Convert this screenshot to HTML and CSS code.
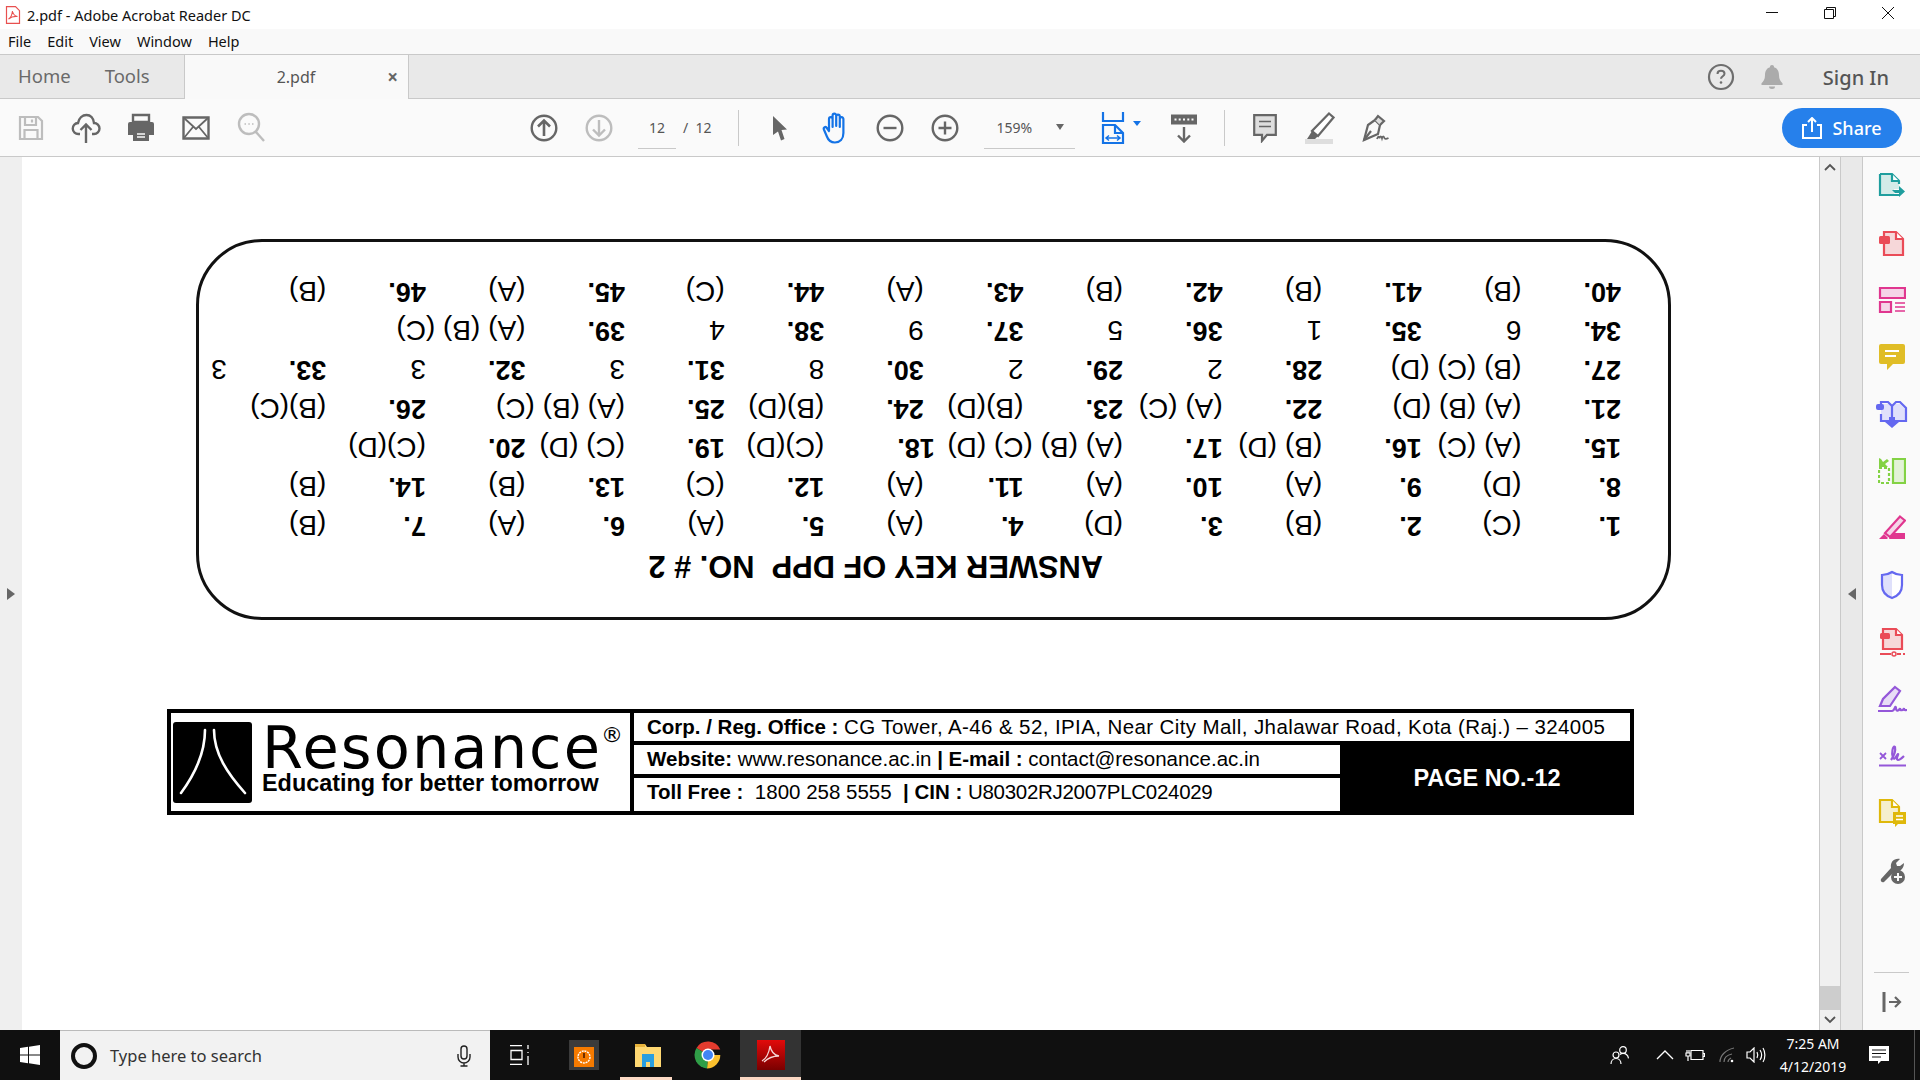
FILE: index.html
```html
<!DOCTYPE html>
<html lang="en">
<head>
<meta charset="utf-8">
<title>2.pdf - Adobe Acrobat Reader DC</title>
<link rel="stylesheet" href="styles.css">
</head>
<body>
<header class="titlebar">
  <svg class="title-icon" width="16" height="18" viewBox="0 0 16 18"><path d="M1.5.7h9l4 4v12.6h-13z" fill="#fff" stroke="#e8504f" stroke-width="1.2"/><path d="M3.500 13c2-1 3.500-4 4-8 .5 3 2 5 5 5.500-3-.3-6.500.5-9 2.500z" fill="none" stroke="#e8504f" stroke-width="1.100"/></svg>
  <span class="title-text">2.pdf - Adobe Acrobat Reader DC</span>
  <div class="win-controls">
    <svg width="12" height="12" viewBox="0 0 12 12"><path d="M0 5.500h12" stroke="#111" stroke-width="1"/></svg>
    <svg width="12" height="12" viewBox="0 0 12 12"><path d="M.5 2.500h9v9h-9zM2.500 2.500v-2h9v9h-2" fill="none" stroke="#111" stroke-width="1"/></svg>
    <svg width="12" height="12" viewBox="0 0 12 12"><path d="M0 0l12 12M12 0L0 12" stroke="#111" stroke-width="1"/></svg>
  </div>
</header>
<nav class="menubar"><span>File</span><span>Edit</span><span>View</span><span>Window</span><span>Help</span></nav>
<div class="tabbar">
  <span class="tab-link home">Home</span>
  <span class="tab-link tools">Tools</span>
  <div class="doc-tab"><span class="doc-name">2.pdf</span><span class="doc-close">×</span></div>
  <div class="tab-right">
    <svg width="28" height="28" viewBox="0 0 28 28"><circle cx="14" cy="14" r="12" fill="none" stroke="#6e6e6e" stroke-width="2.200"/><path d="M10.500 11c0-2 1.500-3.200 3.500-3.200s3.500 1.200 3.500 3c0 2.500-3.500 2.500-3.500 5" fill="none" stroke="#6e6e6e" stroke-width="2"/><circle cx="14" cy="19.500" r="1.300" fill="#6e6e6e"/></svg>
    <svg class="bell" width="24" height="28" viewBox="0 0 24 28"><path d="M12 2a2 2 0 0 1 2 2.300c3.500 1 5 4 5 8 0 4 1.500 6 3.500 8v1.700h-21v-1.700c2-2 3.500-4 3.500-8 0-4 1.500-7 5-8A2 2 0 0 1 12 2z" fill="#ababab"/><path d="M9 23.500h6a3 2.500 0 0 1-6 0z" fill="#ababab"/></svg>
    <span class="signin">Sign In</span>
  </div>
</div>
<div class="toolbar">
  <span class="slot first">
    <svg width="28" height="28" viewBox="0 0 28 28" fill="none" stroke="#bdbdbd" stroke-width="2.200"><path d="M3 3h18l4 4v18H3z"/><path d="M8 3v8h11V3M15 5.500v3M7.500 25v-9h13v9"/></svg>
  </span>
  <span class="slot">
    <svg width="30" height="32" viewBox="0 0 30 32" fill="none" stroke="#666" stroke-width="2.400"><path d="M9 22H7.500a5.500 5.500 0 0 1-.5-11C8 6 11.500 3 15.500 3c4 0 7 3 7.500 8a5.500 5.500 0 0 1 0 11h-2"/><path d="M15 31V13M9.500 18l5.500-5.500 5.500 5.500"/></svg>
  </span>
  <span class="slot">
    <svg width="28" height="30" viewBox="0 0 28 30"><path d="M6 2h16v7H6z" fill="none" stroke="#666" stroke-width="2.400"/><path d="M3 9h22a2 2 0 0 1 2 2v11h-5v-5H6v5H1V11a2 2 0 0 1 2-2z" fill="#666"/><path d="M6 17h16v11H6z" fill="#666"/><path d="M10 21h8M10 24h8" stroke="#fafafa" stroke-width="1.500"/></svg>
  </span>
  <span class="slot">
    <svg width="28" height="26" viewBox="0 0 28 26" fill="none" stroke="#666" stroke-width="2.400"><path d="M1.500 2.500h25v21h-25z"/><path d="M1.500 2.500L14 14 26.500 2.500M1.500 23.500l9.500-11.500M26.500 23.500L17 12" stroke-width="1.800"/></svg>
  </span>
  <span class="slot">
    <svg width="28" height="34" viewBox="0 0 28 34" fill="none" stroke="#bdbdbd" stroke-width="2.400"><circle cx="12" cy="13" r="10"/><path d="M19 21l8 9"/><path d="M7.500 13h1.500M11.300 13h1.500M15 13h1.500" stroke-width="1.600"/></svg>
  </span>

  <span class="slot nav-start">
    <svg width="28" height="28" viewBox="0 0 28 28" fill="none" stroke="#666" stroke-width="2.400"><circle cx="14" cy="14" r="12.300"/><path d="M14 22V7M8 12.500L14 6.500l6 6" stroke-width="2.600"/></svg>
  </span>
  <span class="slot">
    <svg width="28" height="28" viewBox="0 0 28 28" fill="none" stroke="#bdbdbd" stroke-width="2.400"><circle cx="14" cy="14" r="12.300"/><path d="M14 6v15M8 15.500l6 6 6-6"/></svg>
  </span>
  <span class="field page-field">12</span>
  <span class="page-total">/ &nbsp;12</span>
  <span class="tb-sep sep-one"></span>
  <span class="slot cursor-slot">
    <svg width="20" height="26" viewBox="0 0 20 26"><path d="M3 1l14 13.500-5.500.5 3 9-3.500 1.500-3-9L3 20z" fill="#666"/></svg>
  </span>
  <span class="slot">
    <svg width="28" height="32" viewBox="0 0 28 32" fill="none" stroke="#1473e6" stroke-width="2.200" stroke-linecap="round" stroke-linejoin="round"><path d="M8 19V7a1.800 1.800 0 0 1 3.600 0v8M11.600 14V3.500a1.800 1.800 0 0 1 3.600 0V14M15.200 14V4.500a1.800 1.800 0 0 1 3.600 0V15M18.800 15V7a1.800 1.800 0 0 1 3.600 0v14c0 6-3.500 9.500-8.500 9.500-4 0-6.500-2-8-6l-3-7c-.8-2 1.800-3.500 3-1.500L8 19"/></svg>
  </span>
  <span class="slot">
    <svg width="28" height="28" viewBox="0 0 28 28" fill="none" stroke="#666" stroke-width="2.400"><circle cx="14" cy="14" r="12.300"/><path d="M7.500 14h13"/></svg>
  </span>
  <span class="slot">
    <svg width="28" height="28" viewBox="0 0 28 28" fill="none" stroke="#666" stroke-width="2.400"><circle cx="14" cy="14" r="12.300"/><path d="M7.500 14h13M14 7.500v13"/></svg>
  </span>
  <span class="field zoom-field"><span>159%</span><i class="caret"></i></span>
  <span class="fit-slot">
    <svg width="24" height="32" viewBox="0 0 24 32" fill="none" stroke="#1473e6" stroke-width="2.200"><path d="M2 0v9h20V0"/><path d="M2 31V13h12l8 8v10z"/><path d="M14 13v8h8"/><path d="M5 26h14M8 23.500L5 26l3 2.500M16 23.500l3 2.500-3 2.500" stroke-width="1.500"/></svg>
  </span>
  <span class="fit-caret"></span>
  <span class="read-slot">
    <svg width="28" height="30" viewBox="0 0 28 30" fill="none" stroke="#666"><path d="M1 1.500h26v10H1z" fill="#666" stroke="none"/><path d="M4.500 6.500h2M8.700 6.500h2M13 6.500h2M17.300 6.500h2M21.500 6.500h2" stroke="#fafafa" stroke-width="2.200"/><path d="M14 14v14M8 22.500l6 6 6-6" stroke-width="2.400"/></svg>
  </span>
  <span class="tb-sep sep-two"></span>
  <span class="slot comment-slot">
    <svg width="26" height="30" viewBox="0 0 26 30"><path d="M2.200 2.200h21.600v19.600H15l-5 6v-6H2.200z" fill="#dedede" stroke="#666" stroke-width="2.200"/><path d="M7 8.500h12M7 13.500h12" stroke="#666" stroke-width="1.600"/></svg>
  </span>
  <span class="slot">
    <svg width="30" height="32" viewBox="0 0 30 32"><path d="M0 27h28v5H0z" fill="#dedede"/><path d="M24 1.500l4.500 4L13 24l-6-5z" fill="#fff" stroke="#666" stroke-width="2.200"/><path d="M4 24l3-5 6 5-3 3H2z" fill="#666"/></svg>
  </span>
  <span class="slot">
    <svg width="30" height="30" viewBox="0 0 30 30" fill="none" stroke="#666" stroke-width="2.200"><path d="M15 7l5 5-2 9-14 6 4-15z" fill="#fafafa"/><path d="M15 7l3-4 6 5-4 4" fill="#dedede"/><path d="M4 27l7-9"/><path d="M17 26c1-3 2-3 2.500-.8.700-2.500 1.800-2.500 2.500 0 .7-2.500 1.800-2.500 2.500 0 .8 1 2 .8 4-.2" stroke-width="1.800"/></svg>
  </span>
  <span class="share">
    <svg width="20" height="22" viewBox="0 0 20 22" fill="none" stroke="#fff" stroke-width="2"><path d="M5 8H1v13h18V8h-4"/><path d="M10 15V2M6 5l4-4 4 4"/></svg>
    <span>Share</span>
  </span>
</div>

<main class="workspace">
  <aside class="left-strip"><i class="arrow-right"></i></aside>
  <section class="doc">
    <div class="answers">
      <div class="answers-title">ANSWER KEY OF DPP&nbsp;&nbsp;NO. # 2</div>
      <div class="row"><b>1.</b><span>(C)</span><b>2.</b><span>(B)</span><b>3.</b><span>(D)</span><b>4.</b><span>(A)</span><b>5.</b><span>(A)</span><b>6.</b><span>(A)</span><b>7.</b><span>(B)</span></div>
      <div class="row"><b>8.</b><span>(D)</span><b>9.</b><span>(A)</span><b>10.</b><span>(A)</span><b>11.</b><span>(A)</span><b>12.</b><span>(C)</span><b>13.</b><span>(B)</span><b>14.</b><span>(B)</span></div>
      <div class="row"><b>15.</b><span>(A) (C)</span><b>16.</b><span>(B) (D)</span><b>17.</b><span class="wide">(A) (B) (C) (D)</span><b class="nudge">18.</b><span>(C)(D)</span><b>19.</b><span>(C) (D)</span><b>20.</b><span>(C)(D)</span></div>
      <div class="row"><b>21.</b><span class="wide">(A) (B) (D)</span><b>22.</b><span>(A) (C)</span><b>23.</b><span>(B)(D)</span><b>24.</b><span>(B)(D)</span><b>25.</b><span class="wide">(A) (B) (C)</span><b>26.</b><span>(B)(C)</span></div>
      <div class="row"><b>27.</b><span class="wide">(B) (C) (D)</span><b>28.</b><span>2</span><b>29.</b><span>2</span><b>30.</b><span>8</span><b>31.</b><span>3</span><b>32.</b><span>3</span><b>33.</b><span>3</span></div>
      <div class="row"><b>34.</b><span>6</span><b>35.</b><span>1</span><b>36.</b><span>5</span><b>37.</b><span>9</span><b>38.</b><span>4</span><b>39.</b><span>(A) (B) (C)</span></div>
      <div class="row"><b>40.</b><span>(B)</span><b>41.</b><span>(B)</span><b>42.</b><span>(B)</span><b>43.</b><span>(A)</span><b>44.</b><span>(C)</span><b>45.</b><span>(A)</span><b>46.</b><span>(B)</span></div>
    </div>

    <div class="letterhead">
      <div class="brand">
        <svg class="brand-mark" width="79" height="81" viewBox="0 0 79 81"><rect width="79" height="81" rx="3" fill="#000"/><path d="M32 8C32 32 22 52 8 71" fill="none" stroke="#fff" stroke-width="2.600" stroke-linecap="round"/><path d="M41 8C41 32 55 52 72 71" fill="none" stroke="#fff" stroke-width="2.600" stroke-linecap="round"/></svg>
        <div class="brand-text">
          <div class="brand-name">Resonance<sup>®</sup></div>
          <div class="brand-tag">Educating for better tomorrow</div>
        </div>
      </div>
      <div class="info">
        <div class="info-line full"><b>Corp. / Reg. Office :</b> <span class="spaced">CG Tower, A-46 &amp; 52, IPIA, Near City Mall, Jhalawar Road, Kota (Raj.) – 324005</span></div>
        <div class="info-line"><b>Website:</b> www.resonance.ac.in <b>| E-mail :</b> contact@resonance.ac.in</div>
        <div class="page-no">PAGE NO.-12</div>
        <div class="info-line"><b>Toll Free :</b>&nbsp; 1800 258 5555 &nbsp;<b>| CIN :</b> <span class="tight">U80302RJ2007PLC024029</span></div>
      </div>
    </div>
  </section>
  <div class="scrollbar">
    <svg width="12" height="8" viewBox="0 0 12 8"><path d="M1 7l5-5 5 5" fill="none" stroke="#555" stroke-width="1.800"/></svg>
    <div class="thumb"></div>
    <svg width="12" height="8" viewBox="0 0 12 8"><path d="M1 1l5 5 5-5" fill="none" stroke="#555" stroke-width="1.800"/></svg>
  </div>
  <div class="pane-handle"><i class="arrow-left"></i></div>
  <aside class="tools-pane">
    <span class="tool"><svg width="28" height="28" viewBox="0 0 28 28"><path d="M2 2h12l7 7v8h-5v6H2z" fill="#d3ebe8"/><path d="M2 2h12l7 7v3M21 23H2V2" fill="none" stroke="#1f9e9e" stroke-width="2.200"/><path d="M14 2v7h7" fill="#fff" stroke="#1f9e9e" stroke-width="2.200"/><path d="M14 18h7v-4l6 5.500-6 5.500v-4h-4z" fill="#1f9e9e"/></svg></span>
    <span class="tool"><svg width="28" height="28" viewBox="0 0 28 28"><path d="M6 3h12l7 7v16H6z" fill="#f6d7d9" stroke="#ea4b57" stroke-width="2.200"/><path d="M18 3v7h7" fill="#fff" stroke="#ea4b57" stroke-width="2.200"/><rect x="1" y="7" width="11" height="8" rx="1.500" fill="#ea4b57"/></svg></span>
    <span class="tool"><svg width="28" height="28" viewBox="0 0 28 28"><path d="M2 2h25v10H2z" fill="#f5d4e8" stroke="#e0368f" stroke-width="2.200"/><path d="M2 16h11v10H2z" fill="#f5d4e8" stroke="#e0368f" stroke-width="2.200"/><path d="M17 17h10M17 21h10M17 25h10" stroke="#e0368f" stroke-width="1.500"/></svg></span>
    <span class="tool"><svg width="26" height="28" viewBox="0 0 26 28"><path d="M2 1h22a2 2 0 0 1 2 2v16a2 2 0 0 1-2 2H14l-6 6v-6H2a2 2 0 0 1-2-2V3a2 2 0 0 1 2-2z" fill="#e0bd26"/><path d="M6 8h14M6 13h11" stroke="#fff" stroke-width="2"/></svg></span>
    <span class="tool"><svg width="32" height="30" viewBox="0 0 32 30"><path d="M5 5h8l3 3v14H5zM17 5h7l6 6v11H17z" fill="#e0e0fb"/><path d="M5 6V3h7l4 4v15H5v-7M16 7l4-4h4l6 6v13H18" fill="none" stroke="#6468f0" stroke-width="2.200"/><rect x="0" y="5" width="8" height="6" rx="2" fill="#6468f0"/><path d="M13 18h6v5h4l-7 6-7-6h4z" fill="#6468f0"/></svg></span>
    <span class="tool"><svg width="28" height="28" viewBox="0 0 28 28"><path d="M15 2h12v24H15z" fill="#e3f2d7" stroke="#83d244" stroke-width="2.200"/><path d="M1 11h10v15H1z" fill="none" stroke="#83d244" stroke-width="2.200" stroke-dasharray="3 2"/><path d="M1 1v9h9l-3-3 4-3-2-2-4 3-2-3z" fill="#83d244"/></svg></span>
    <span class="tool"><svg width="28" height="26" viewBox="0 0 28 26"><path d="M11 24h16v-6H14z" fill="#e0368f"/><path d="M22 1.500l5 4L12 22l-5-4z" fill="#f5d4e8" stroke="#e0368f" stroke-width="2.200"/><path d="M1 24l5-5 4 4-1 1z" fill="#e0368f"/></svg></span>
    <span class="tool"><svg width="24" height="30" viewBox="0 0 24 30"><path d="M12 28c-6-2-10-6-10-13V5c4 0 7-1 10-3 3 2 6 3 10 3v10c0 7-4 11-10 13z" fill="#fff" stroke="none"/><path d="M12 2c-3 2-6 3-10 3v10c0 7 4 11 10 13z" fill="#dfe0fb"/><path d="M12 28c-6-2-10-6-10-13V5c4 0 7-1 10-3 3 2 6 3 10 3v10c0 7-4 11-10 13z" fill="none" stroke="#6468f0" stroke-width="2.200"/></svg></span>
    <span class="tool"><svg width="26" height="30" viewBox="0 0 26 30"><path d="M4 2h13l6 6v14H4z" fill="#f6d7d9" stroke="#ea4b57" stroke-width="2.200"/><path d="M17 2v6h6" fill="#fff" stroke="#ea4b57" stroke-width="2.200"/><rect x="1" y="6" width="10" height="6" rx="1.500" fill="#ea4b57"/><path d="M1 27h11M18 27h4M24 27h2" stroke="#ea4b57" stroke-width="2"/><circle cx="15" cy="27" r="2" fill="none" stroke="#ea4b57" stroke-width="1.500"/></svg></span>
    <span class="tool"><svg width="30" height="28" viewBox="0 0 30 28" fill="none" stroke="#9457d9" stroke-width="2.200"><path d="M18 2l5 4-10 15H3l3-7z" fill="#e8dcf6"/><path d="M1 26h14c3 0 3-7 4-3 0 4 3 3 4 0 0 3 3 3 4 0 0 3 1 2 3 2"/></svg></span>
    <span class="tool"><svg width="28" height="24" viewBox="0 0 28 24" fill="none" stroke="#9457d9"><path d="M1 21.500h27" stroke-width="2"/><path d="M2 9l6 6M8 9l-6 6" stroke-width="1.800"/><path d="M13 16c3-4 5-8 4-13-2-2-4 6-2 11 2 2 3-2 5-4 1 0-3 5 0 6 2 0 4-2 6-4" stroke-width="2.200"/></svg></span>
    <span class="tool"><svg width="28" height="30" viewBox="0 0 28 30"><path d="M2 2h12l7 7v15H2z" fill="#f5efcd" stroke="#dfb80a" stroke-width="2.200"/><path d="M14 2v7h7" fill="#fff" stroke="#dfb80a" stroke-width="2.200"/><path d="M15 14h13v12h-8l-3 3v-3h-2z" fill="#dfb80a"/><path d="M18 18h7M18 21.500h7" stroke="#fff" stroke-width="1.500"/></svg></span>
    <span class="tool"><svg width="28" height="28" viewBox="0 0 28 28"><path d="M3 23L13 12c-1-6 3-10 9-9l-4 4 1 3 3 0 4-3c0 6-5 10-10 9L6 26c-2 1-4-1-3-3z" fill="#666"/><circle cx="20" cy="21" r="7" fill="#666"/><path d="M16 21h8M20 17v8" stroke="#fafafa" stroke-width="2"/></svg></span>
    <div class="pane-foot">
      <svg width="20" height="20" viewBox="0 0 20 20" fill="none" stroke="#666" stroke-width="2.200"><path d="M2 0v20" stroke-width="3"/><path d="M7 10h11M13 5l5 5-5 5"/></svg>
    </div>
  </aside>
</main>

<footer class="taskbar">
  <span class="start"><svg width="20" height="20" viewBox="0 0 20 20" fill="#fff"><path d="M0 3l8-1.200V9.500H0zM9 1.700L20 0v9.500H9zM0 10.500h8v7.700L0 17zM9 10.500h11V20L9 18.300z"/></svg></span>
  <div class="search">
    <i class="cortana"></i>
    <span class="search-text">Type here to search</span>
    <svg class="mic" width="14" height="22" viewBox="0 0 14 22" fill="none" stroke="#222" stroke-width="1.400"><rect x="4" y="1" width="6" height="13" rx="3"/><path d="M1 9v3a6 6 0 0 0 12 0V9M7 18v3M3.500 21h7"/></svg>
  </div>
  <span class="task-view"><svg width="20" height="20" viewBox="0 0 20 20" fill="none" stroke="#fff" stroke-width="1.300"><path d="M0 .7h12M1 5.500h11v9H1zM0 19.300h12M18 0v4M18 7v1M18 11v9"/></svg></span>
  <span class="app app-timer"><svg width="30" height="30" viewBox="0 0 30 30"><rect width="30" height="30" fill="#3b3b3b"/><rect x="5" y="7" width="20" height="20" fill="#f57a00"/><circle cx="15" cy="17" r="6" fill="none" stroke="#fff" stroke-width="1.400" stroke-dasharray="2 .8"/><path d="M15 13v5" stroke="#4a1c00" stroke-width="1.600"/></svg></span>
  <span class="app app-folder"><svg width="28" height="26" viewBox="0 0 28 26"><path d="M1 2h10l2 3h14v20H1z" fill="#ffd872"/><path d="M1 2h10v3H1z" fill="#e8b33c"/><path d="M8 12h12v13h-4v-5h-4v5H8z" fill="#2a9ee0"/></svg></span>
  <span class="app"><svg width="28" height="28" viewBox="0 0 28 28"><path d="M14 14L2.500 7A13.500 13.500 0 0 1 26.300 8.500H14z" fill="#e33b2e"/><path d="M14 14h12.300A13.500 13.500 0 0 1 13 27.500z" fill="#fbc02d"/><path d="M14 14L13 27.500A13.500 13.500 0 0 1 2.500 7z" fill="#2f9e47"/><circle cx="14" cy="14" r="6.500" fill="#fff"/><circle cx="14" cy="14" r="5" fill="#4285f4"/></svg></span>
  <span class="app active"><svg width="28" height="30" viewBox="0 0 28 30"><defs><linearGradient id="acro" x1="0" y1="0" x2="0" y2="1"><stop offset="0" stop-color="#e20a0a"/><stop offset="1" stop-color="#7a0000"/></linearGradient></defs><rect width="28" height="30" fill="url(#acro)"/><path d="M5 21c5-3 7-8 8-15 1 5 3 9 9 10-6 0-11 2-15 6" fill="none" stroke="#f6d6d6" stroke-width="1.300"/></svg></span>
  <div class="tray">
    <svg class="tray-people" width="20" height="20" viewBox="0 0 20 20" fill="none" stroke="#fff" stroke-width="1.200"><circle cx="13" cy="5" r="3.300"/><circle cx="6" cy="10" r="3"/><path d="M1 19c0-3 2-5.500 5-5.500s5 2.500 5 5.500M10 9.500c1-1 2-1.200 3-1.200 3 0 5 2 5.500 5"/></svg>
    <svg class="tray-chev" width="18" height="10" viewBox="0 0 18 10" fill="none" stroke="#fff" stroke-width="1.300"><path d="M1 9l8-8 8 8"/></svg>
    <svg class="tray-batt" width="20" height="14" viewBox="0 0 20 14" fill="none" stroke="#fff" stroke-width="1.200"><path d="M6 2.500h12v9H6z"/><path d="M18 5.500h1.500v3H18"/><path d="M1 5h4v3H1zM2 2v3M4 2v3M3 8v5"/></svg>
    <svg class="tray-wifi" width="18" height="16" viewBox="0 0 18 16" fill="none" stroke="#777" stroke-width="1.200"><path d="M1 15C1 9 6 3 15 1M5 15c0-4 3-7 8-8" /><path d="M9 15c0-2 1-3 3-4"/><circle cx="13" cy="14" r="1.300" fill="#fff" stroke="none"/></svg>
    <svg class="tray-vol" width="20" height="16" viewBox="0 0 20 16" fill="none" stroke="#fff" stroke-width="1.200"><path d="M1 5h3l4-4v14l-4-4H1z"/><path d="M11 5c1 2 1 4 0 6M14 3c2 3 2 7 0 10M17 1c2.500 4 2.500 10 0 14"/></svg>
    <div class="clock"><span>7:25 AM</span><span>4/12/2019</span></div>
    <svg class="tray-note" width="20" height="18" viewBox="0 0 20 18"><path d="M0 0h20v15H12l-3 3v-3H0z" fill="#fff"/><path d="M3 4h14M3 7.500h14M3 11h9" stroke="#111" stroke-width="1.200"/></svg>
    <i class="tray-edge"></i>
  </div>
</footer>
</body>
</html>
```

FILE: styles.css
```css
* { box-sizing: border-box; }
html, body { margin: 0; height: 100%; }
body {
  display: flex;
  flex-direction: column;
  height: 1080px;
  width: 1920px;
  overflow: hidden;
  background: #fff;
  font-family: "Noto Sans", "Open Sans", sans-serif;
  color: #222;
}
svg { display: block; flex: none; }

.titlebar {
  height: 29px;
  flex: none;
  display: flex;
  align-items: center;
  padding-left: 5px;
  background: #fff;
  font-size: 14.500px;
  color: #111;
}
.title-text { margin-left: 6px; }
.win-controls { margin-left: auto; display: flex; gap: 46px; padding-right: 26px; margin-top: -3px; }

.menubar {
  height: 26px;
  flex: none;
  display: flex;
  align-items: center;
  gap: 16px;
  padding: 0 0 2px 8px;
  background: #f9f9f9;
  border-bottom: 1px solid #c9c9c9;
  font-size: 14.500px;
  color: #111;
}

.tabbar {
  height: 44px;
  flex: none;
  display: flex;
  align-items: center;
  background: #e9e9e9;
  border-bottom: 1px solid #c9c9c9;
  font-size: 18.500px;
  color: #6a6a6a;
}
.tab-link { margin-top: -2px; }
.home { margin-left: 18px; }
.tools { margin-left: 34px; }
.doc-tab {
  margin-left: 34px;
  width: 225px;
  height: 44px;
  display: flex;
  align-items: center;
  position: relative;
  background: #f9f9f9;
  border-left: 1px solid #c9c9c9;
  border-right: 1px solid #c9c9c9;
  font-size: 16px;
  color: #555;
}
.doc-name { margin-left: 92px; }
.doc-close { margin-left: 72px; font-size: 19px; font-weight: 700; color: #666; }
.tab-right { margin-left: auto; display: flex; align-items: center; padding-right: 31px; }
.bell { margin-left: 25px; }
.signin { margin-left: 39px; font-size: 20px; font-weight: 500; color: #555; margin-top: 1px; }

.toolbar {
  height: 58px;
  flex: none;
  display: flex;
  align-items: center;
  background: #fafafa;
  border-bottom: 1px solid #c9c9c9;
  padding-right: 18px;
}
.slot { width: 55px; display: flex; justify-content: center; align-items: center; flex: none; }
.first { margin-left: 3.500px; }
.nav-start { margin-left: 238px; }
.field {
  height: 36px;
  display: flex;
  align-items: center;
  justify-content: center;
  border-bottom: 1px solid #c9c9c9;
  font-size: 14px;
  color: #555;
  flex: none;
}
.page-field { width: 38px; margin-left: 11.500px; margin-top: 6px; padding-bottom: 6px; }
.page-total { width: 33px; margin-left: 7px; font-size: 14px; color: #555; flex: none; }
.tb-sep { width: 1px; height: 36px; background: #c9c9c9; flex: none; }
.sep-one { margin-left: 22px; }
.cursor-slot { margin-left: 13px; }
.zoom-field { width: 91px; margin-left: 11.500px; margin-top: 6px; padding-bottom: 6px; justify-content: flex-start; padding-left: 13px; }
.caret { border: 4.500px solid transparent; border-top: 6px solid #666; border-bottom: 0; margin-left: 24px; }
.fit-slot { width: 36px; margin-left: 20px; display: flex; justify-content: center; flex: none; }
.fit-caret { width: 0; border: 4px solid transparent; border-top: 5px solid #1473e6; border-bottom: 0; flex: none; margin-left: 2px; margin-top: -8px; }
.read-slot { width: 36px; margin-left: 25px; display: flex; justify-content: center; flex: none; }
.sep-two { margin-left: 22px; }
.comment-slot { margin-left: 12.500px; }
.share {
  margin-left: auto;
  width: 120px;
  height: 40px;
  flex: none;
  display: flex;
  align-items: center;
  justify-content: center;
  gap: 10px;
  border-radius: 20px;
  background: #2680eb;
  color: #fff;
  font-size: 18px;
  font-weight: 500;
}

.workspace { flex: 1; min-height: 0; display: flex; }
.left-strip { width: 22px; background: #efefef; flex: none; display: flex; align-items: center; justify-content: center; }
.arrow-right { border: 6px solid transparent; border-left: 8px solid #666; border-right: 0; }
.doc { flex: 1; min-width: 0; overflow: hidden; background: #fff; padding-top: 82px; font-family: "Liberation Sans", Arial, sans-serif; color: #000; }

.answers {
  width: 1475px;
  height: 381px;
  margin-left: 174px;
  padding: 29px 0 0 47px;
  border: 3px solid #111;
  border-radius: 66px;
  transform: rotate(180deg);
  font-size: 27px;
}
.answers-title { height: 43px; line-height: 43px; margin-left: 518px; font-size: 30.800px; font-weight: 700; white-space: nowrap; }
.row { display: grid; grid-template-columns: repeat(15, 99.600px); height: 39px; line-height: 39px; white-space: nowrap; }
.row b { font-weight: 700; }
.row span { font-size: 28px; }
.wide { grid-column: span 2; }
.nudge { transform: translateX(-11px); }

.letterhead {
  width: 1467px;
  height: 106px;
  margin: 89px 0 0 145px;
  display: grid;
  grid-template-columns: 459px 1fr;
  border: 4px solid #000;
  background: #000;
  gap: 4px;
}
.brand { background: #fff; display: flex; align-items: center; padding-left: 1px; }
.brand-mark { margin-left: 1px; }
.brand-text { margin: -4px 0 0 10px; width: 360px; }
.brand-name { font-family: "DejaVu Sans", sans-serif; font-size: 59px; line-height: 44px; letter-spacing: 2.100px; height: 45px; white-space: nowrap; }
.brand-name sup { font-size: 22px; line-height: 0; vertical-align: 26px; letter-spacing: 0; margin-left: -1px; }
.brand-tag { font-size: 23.400px; font-weight: 700; line-height: 24px; white-space: nowrap; }
.info { display: grid; grid-template-columns: 1fr 286px; grid-template-rows: 28px 29px 1fr; gap: 4px; font-size: 20.500px; }
.info-line { background: #fff; padding-left: 13px; line-height: 28px; white-space: pre; }
.spaced { letter-spacing: .4px; }
.tight { letter-spacing: -.3px; }
.full { grid-column: span 2; }
.page-no { grid-row: span 2; display: flex; align-items: center; justify-content: center; color: #fff; font-weight: 700; font-size: 23.500px; }

.scrollbar { width: 22px; flex: none; background: #f0f0f0; border-left: 1px solid #c9c9c9; border-right: 1px solid #c9c9c9; display: flex; flex-direction: column; align-items: center; padding: 6px 0 6px; }
.thumb { margin-top: auto; width: 20px; height: 24px; background: #cdcdcd; margin-bottom: 6px; }
.pane-handle { width: 22px; flex: none; background: #e9e9e9; border-right: 1px solid #c9c9c9; display: flex; align-items: center; justify-content: center; }
.arrow-left { border: 6px solid transparent; border-right: 8px solid #666; border-left: 0; }
.tools-pane { width: 57px; flex: none; background: #fafafa; display: flex; flex-direction: column; align-items: center; }
.tool { height: 57px; flex: none; display: flex; align-items: center; justify-content: center; width: 100%; }
.pane-foot { margin-top: auto; width: 35px; height: 58px; border-top: 1px solid #c9c9c9; display: flex; align-items: center; justify-content: center; }

.taskbar { height: 50px; flex: none; display: flex; align-items: center; background: #101010; color: #fff; }
.start { width: 60px; height: 50px; display: flex; align-items: center; justify-content: center; flex: none; }
.search { width: 430px; height: 50px; flex: none; display: flex; align-items: center; background: #f2f2f2; border-top: 1px solid #bbb; color: #333; font-size: 16.500px; }
.cortana { width: 26px; height: 26px; border: 4px solid #111; border-radius: 50%; margin-left: 11px; flex: none; }
.search-text { margin-left: 13px; }
.mic { margin-left: auto; margin-right: 19px; }
.task-view { width: 60px; margin-left: 0; display: flex; justify-content: center; flex: none; }
.app { width: 61px; height: 50px; display: flex; align-items: center; justify-content: center; flex: none; position: relative; }
.app-timer { width: 68px; }
.app-folder { width: 59px; }
.app-folder::after, .active::after { content: ""; position: absolute; left: 2px; right: 5px; bottom: 0; height: 3px; background: #fcd9c4; }
.active { background: #333; margin-left: 2px; }
.active::after { left: 0; right: 0; }
.tray { margin-left: auto; display: flex; align-items: center; height: 50px; }
.tray-chev { margin-left: 26px; }
.tray-batt { margin-left: 11px; }
.tray-wifi { margin-left: 14px; }
.tray-vol { margin-left: 9px; }
.clock { width: 90px; margin-left: 2px; display: flex; flex-direction: column; align-items: center; font-size: 14px; line-height: 23px; }
.tray-note { margin-left: 11px; }
.tray-edge { width: 1px; height: 50px; background: #555; margin-left: 25px; margin-right: 5px; }
```
